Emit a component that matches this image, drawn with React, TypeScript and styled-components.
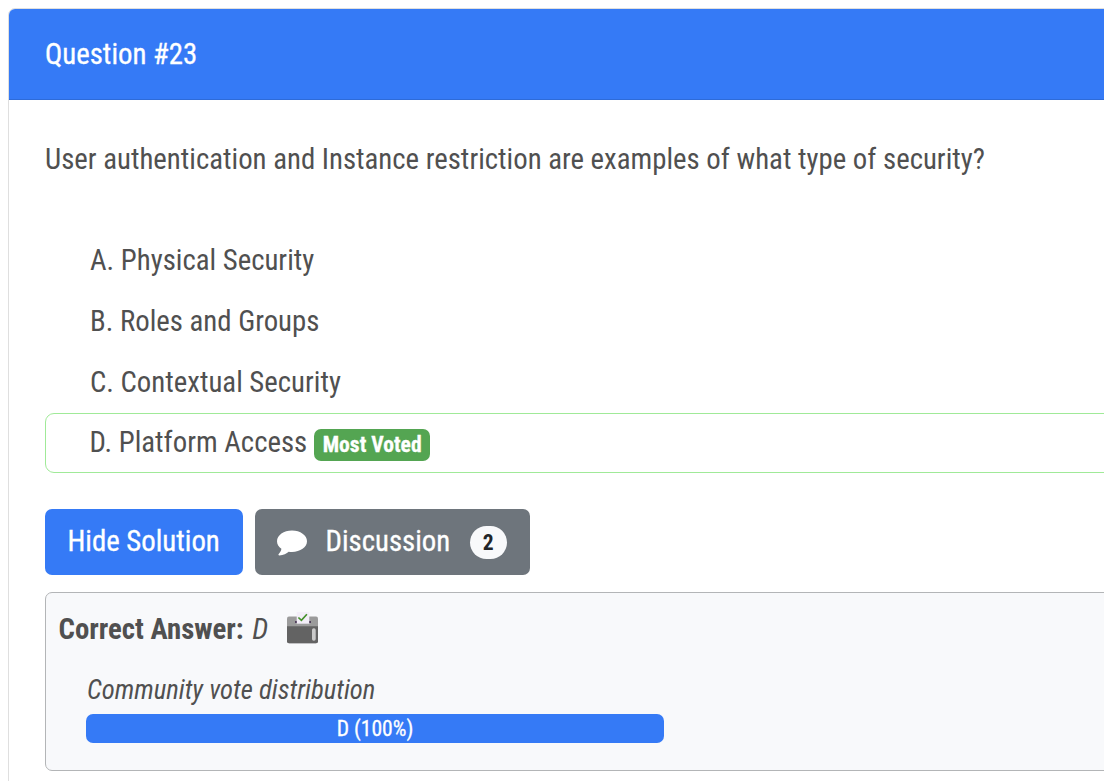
import React from "react";
import styled, { createGlobalStyle } from "styled-components";

const Global = createGlobalStyle`
  * { box-sizing: border-box; }
  html, body { margin: 0; background: #fff; overflow: hidden; }
  body {
    font-family: "Roboto Condensed", Roboto, sans-serif;
    font-stretch: 75%;
    font-size: 28.8px;
    line-height: 43.2px;
    color: #505050;
  }
`;

const Page = styled.div`
  height: 781px;
  padding: 8px 0 0 8px;
  overflow: hidden;
`;
const Card = styled.section`
  width: 1200px;
  height: 900px;
  border: 1px solid #dfdfdf;
  border-radius: 7px;
  overflow: hidden;
`;
const Header = styled.header`
  height: 91px;
  padding: 24px 36px 0;
  background: #357af6;
  border-bottom: 1px solid #2e6bd8;
  color: #fff;
  -webkit-text-stroke: 0.3px #fff;
`;
const Body = styled.div`
  padding: 38px 36px;
`;
const Question = styled.p`
  margin: 0 0 49px;
  white-space: nowrap;
`;
const Choices = styled.ul`
  list-style: none;
  margin: 0 0 36px;
  padding: 0;
`;
const Choice = styled.li<{ $voted?: boolean }>`
  display: flex;
  align-items: center;
  height: ${(p) => (p.$voted ? 60 : 61)}px;
  padding: 0 0 ${(p) => (p.$voted ? 2 : 0)}px ${(p) => (p.$voted ? 43.5 : 44)}px;
  border: 1px solid ${(p) => (p.$voted ? "#a0ea98" : "transparent")};
  border-radius: 9px;
`;
const VotedBadge = styled.span`
  width: 116px;
  height: 32px;
  margin: 5px 0 0 7px;
  border-radius: 7px;
  background: #54a552;
  color: #fff;
  font-size: 21.6px;
  font-weight: 700;
  line-height: 31px;
  text-align: center;
  -webkit-text-stroke: 0.3px #fff;
`;
const Actions = styled.div`
  display: flex;
  gap: 12px;
  margin-bottom: 17px;
`;
const Button = styled.button<{ $muted?: boolean }>`
  display: flex;
  align-items: center;
  width: ${(p) => (p.$muted ? 275 : 198)}px;
  height: 66px;
  padding: 0 0 2px ${(p) => (p.$muted ? 21.5 : 22.5)}px;
  border: 0;
  border-radius: 7px;
  background: ${(p) => (p.$muted ? "#6e757c" : "#357af6")};
  color: #fff;
  font: inherit;
  -webkit-text-stroke: 0.3px #fff;
`;
const Bubble = styled.svg`
  width: 30px;
  height: 26px;
  margin: 3px 19px 0 0;
`;
const Count = styled.span`
  width: 37px;
  height: 33px;
  margin: 3px 0 0 19.5px;
  border-radius: 17px;
  background: #f8f9fb;
  color: #212529;
  font-size: 21.6px;
  font-weight: 700;
  line-height: 33px;
  text-align: center;
  -webkit-text-stroke: 0;
`;
const Solution = styled.div`
  height: 179px;
  padding: 15px 13px;
  border: 1px solid #b3b5b7;
  border-radius: 7px;
  background: #f8f9fb;
`;
const Answer = styled.div`
  display: flex;
  height: 43px;
`;
const Strong = styled.strong`
  margin-left: -0.5px;
  font-weight: 700;
`;
const Letter = styled.em`
  width: 15.5px;
  margin-left: 8.6px;
`;
const BallotBox = styled.svg`
  width: 32px;
  height: 32px;
  margin: 4px 0 0 18.9px;
`;
const Votes = styled.div`
  width: 578px;
  margin: 18px 0 0 27px;
`;
const Caption = styled.div`
  height: 45px;
  padding-left: 1px;
  font-size: 26.7px;
  font-style: italic;
  line-height: 43px;
`;
const Bar = styled.div`
  height: 29px;
  border-radius: 7px;
  background: #357af6;
  color: #fff;
  font-size: 21.6px;
  line-height: 29px;
  text-align: center;
  -webkit-text-stroke: 0.3px #fff;
`;

const choices = ["A. Physical Security", "B. Roles and Groups", "C. Contextual Security"];

export default function App() {
  return (
    <Page>
      <Global />
      <Card>
        <Header>Question #23</Header>
        <Body>
          <Question>User authentication and Instance restriction are examples of what type of security?</Question>
          <Choices>
            {choices.map((c) => (
              <Choice key={c}>{c}</Choice>
            ))}
            <Choice $voted>
              <span>D. Platform Access</span>
              <VotedBadge>Most Voted</VotedBadge>
            </Choice>
          </Choices>
          <Actions>
            <Button>Hide Solution</Button>
            <Button $muted>
              <Bubble viewBox="0 0 30 26">
                <path fill="#fff" d="M15 .5C6.800.5 0 5.200 0 11.200c0 3 1.700 5.600 4.400 7.500C4.200 21.100 2.700 22.900 1.700 23.900c-.6.700-.2 1.500.7 1.500 4 0 7.300-1.900 9.300-3.700 1 .2 2.100.2 3.300.2 8.300 0 15-4.800 15-10.700S23.300.5 15 .5Z" />
              </Bubble>
              <span>Discussion</span>
              <Count>2</Count>
            </Button>
          </Actions>
          <Solution>
            <Answer>
              <Strong>Correct Answer:</Strong>
              <Letter>D</Letter>
              <BallotBox viewBox="0 0 32 32">
                <path fill="#9b9b9b" d="M2 4.500h27q2 0 2 2V29.300q0 2-2 2H2q-2 0-2-2V6.500q0-2 2-2Z" />
                <path fill="#636363" d="M0 14.300h31v15q0 2-2 2H2q-2 0-2-2Z" />
                <path fill="#321b41" d="M8.300 9h15.400v2H8.300Z" />
                <path fill="#f3eef8" d="M9.700 0h12.600v11.700H9.700Z" />
                <path fill="none" stroke="#45912b" strokeWidth="1.700" d="m11.400 5.500 3 2.800 5.500-6" />
                <rect x="25" y="16.300" width="3.700" height="12.400" rx="1.700" fill="#cacaca" />
              </BallotBox>
            </Answer>
            <Votes>
              <Caption>Community vote distribution</Caption>
              <Bar>D (100%)</Bar>
            </Votes>
          </Solution>
        </Body>
      </Card>
    </Page>
  );
}
